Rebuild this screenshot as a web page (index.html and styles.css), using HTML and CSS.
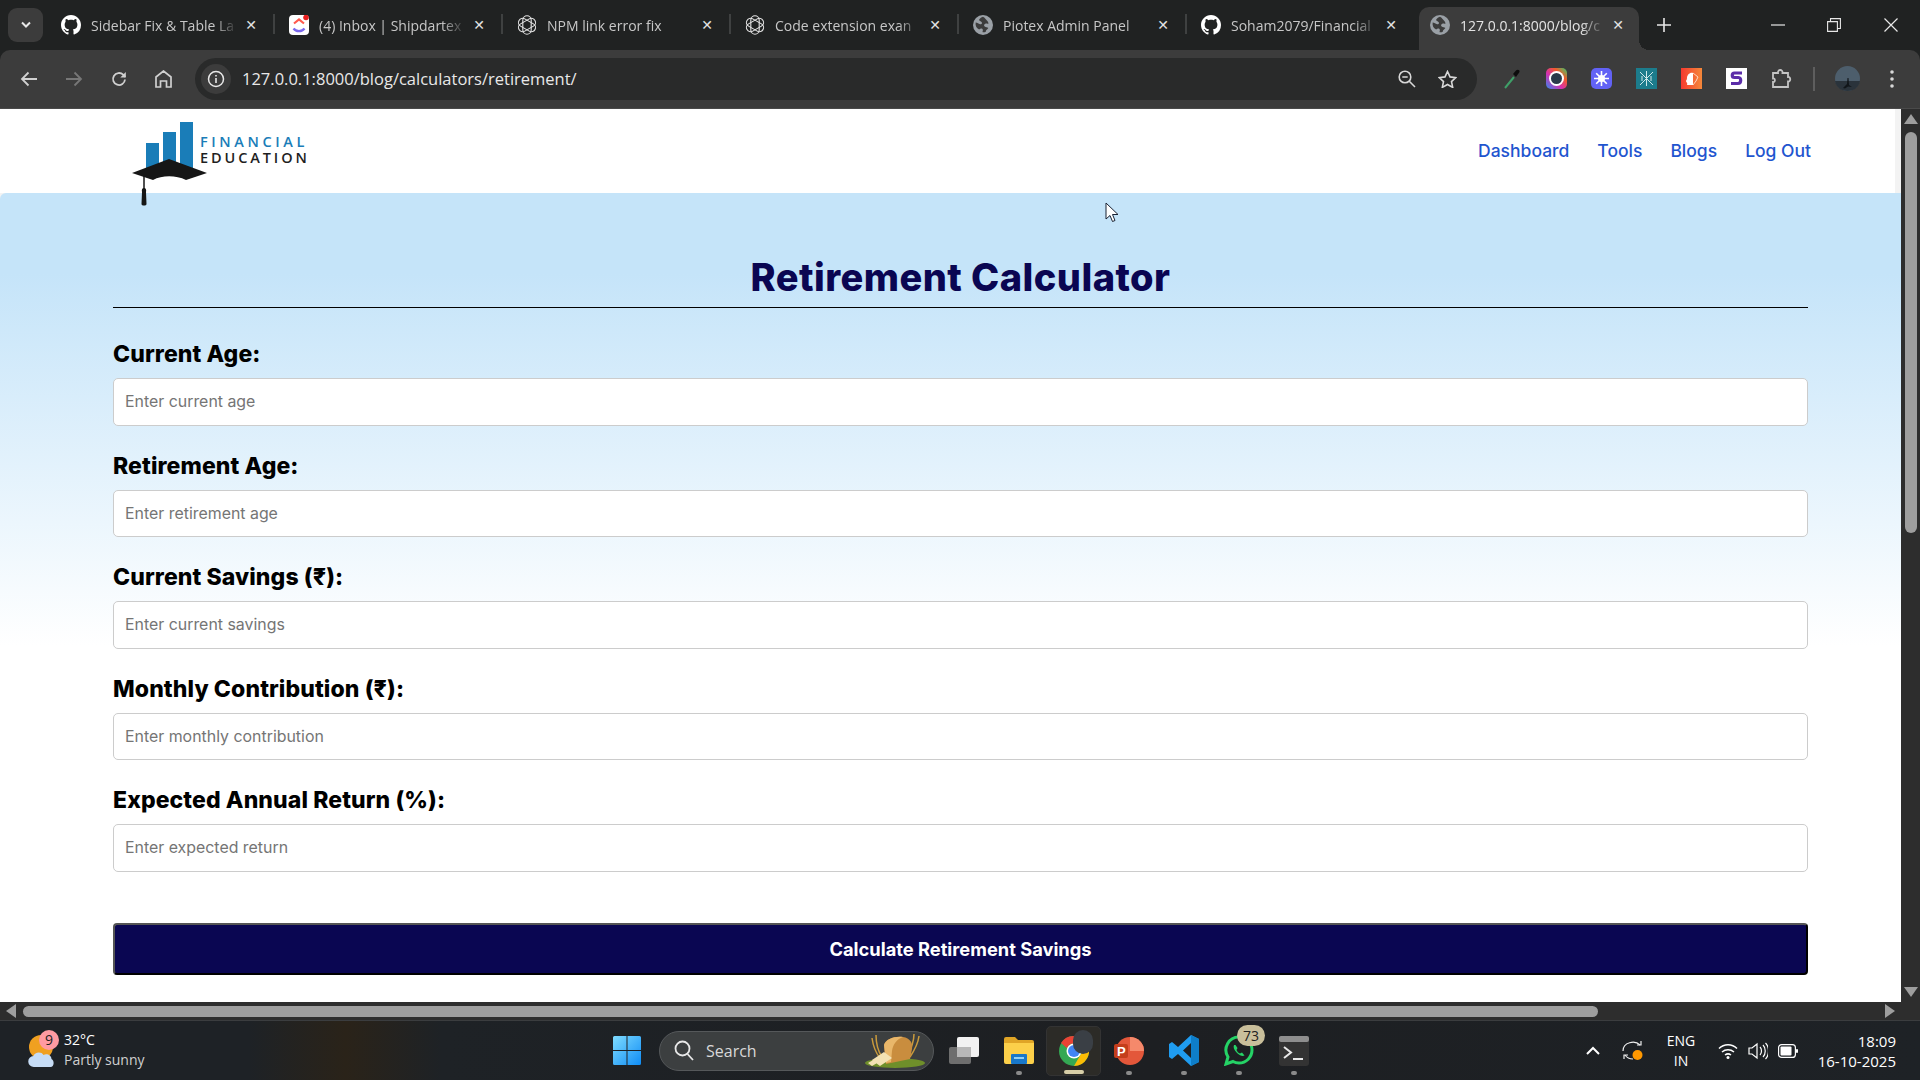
FILE: index.html
```html
<!DOCTYPE html>
<html lang="en">
<head>
    <meta charset="UTF-8">
    <meta name="viewport" content="width=device-width, initial-scale=1.0">
    <title>Retirement Calculator</title>
    <link rel="stylesheet" href="styles.css">
</head>
<body>
    <svg class="defs" width="0" height="0">
        <symbol id="github" viewBox="0 0 16 16"><path fill="#fff" d="M8 0C3.58 0 0 3.58 0 8c0 3.54 2.29 6.53 5.47 7.59.4.07.55-.17.55-.38 0-.19-.01-.82-.01-1.49-2.01.37-2.53-.49-2.69-.94-.09-.23-.48-.94-.82-1.13-.28-.15-.68-.52-.01-.53.63-.01 1.08.58 1.23.82.72 1.21 1.87.87 2.33.66.07-.52.28-.87.51-1.07-1.78-.2-3.64-.89-3.64-3.95 0-.87.31-1.59.82-2.15-.08-.2-.36-1.02.08-2.12 0 0 .67-.21 2.2.82.64-.18 1.32-.27 2-.27.68 0 1.36.09 2 .27 1.53-1.04 2.2-.82 2.2-.82.44 1.1.16 1.92.08 2.12.51.56.82 1.27.82 2.15 0 3.07-1.87 3.75-3.65 3.95.29.25.54.73.54 1.48 0 1.07-.01 1.93-.01 2.2 0 .21.15.46.55.38A8.013 8.013 0 0016 8c0-4.42-3.58-8-8-8z"/></symbol>
        <symbol id="openai" viewBox="0 0 20 20">
            <g fill="none" stroke="#e4e4e4" stroke-width="1.1">
                <rect x="5.800" y=".8" width="8.400" height="18.400" rx="4.200"/>
                <rect x="5.800" y=".8" width="8.400" height="18.400" rx="4.200" transform="rotate(60 10 10)"/>
                <rect x="5.800" y=".8" width="8.400" height="18.400" rx="4.200" transform="rotate(120 10 10)"/>
            </g>
        </symbol>
        <symbol id="globe" viewBox="0 0 18 18">
            <circle cx="9" cy="9" r="9" fill="#9aa0a6"/>
            <path fill="#3c3c3c" d="M9 1.500c-1.600.6-3 1.600-3.600 3 .7 1 2 1.200 2.600 2.200.5 1-.6 1.700-1.600 1.600-1.500-.2-2.400-1.300-4-1.500C2 9.500 3 12 5.500 13c.9-.5 1.800-1.200 2.800-.6 1 .6.5 2 .2 3 .8.3 2 .2 3-.4 0-1.500 1.500-2 2.300-3.300-.8-1-2.300-.6-3.300-1.400-1-.8-.5-2.200.6-2.500 1-.3 1.900.2 2.900-.2C13.500 5 12 4.700 11.300 3.500 10.900 2.800 10 2 9 1.500z"/>
        </symbol>
    </svg>

    <div class="tabstrip">
        <button class="tab-menu"><svg width="12" height="8" viewBox="0 0 12 8"><path d="M2 1.500 6 5.500 10 1.500" fill="none" stroke="#e8e8e8" stroke-width="2"/></svg></button>

        <div class="tab">
            <svg class="tab-icon"><use href="#github"/></svg>
            <span class="tab-title">Sidebar Fix &amp; Table La</span>
            <span class="tab-close">✕</span>
        </div>
        <div class="tab">
            <svg class="tab-icon" viewBox="0 0 20 20">
                <rect width="20" height="20" rx="4" fill="#fff"/>
                <path d="M5 8.500 10 4.500 15 8.500" fill="none" stroke="#ff5a4e" stroke-width="2.200"/>
                <path d="M4.500 13.500C7 17 13 17 15.500 13.500" fill="none" stroke="#7b68ee" stroke-width="2.200"/>
                <circle cx="17" cy="2.500" r="2.800" fill="#e81f1f"/>
            </svg>
            <span class="tab-title">(4) Inbox | Shipdartex</span>
            <span class="tab-close">✕</span>
        </div>
        <div class="tab">
            <svg class="tab-icon"><use href="#openai"/></svg>
            <span class="tab-title">NPM link error fix</span>
            <span class="tab-close">✕</span>
        </div>
        <div class="tab">
            <svg class="tab-icon"><use href="#openai"/></svg>
            <span class="tab-title">Code extension exan</span>
            <span class="tab-close">✕</span>
        </div>
        <div class="tab">
            <svg class="tab-icon"><use href="#globe"/></svg>
            <span class="tab-title">Piotex Admin Panel</span>
            <span class="tab-close">✕</span>
        </div>
        <div class="tab tab-before-active">
            <svg class="tab-icon"><use href="#github"/></svg>
            <span class="tab-title">Soham2079/Financial</span>
            <span class="tab-close">✕</span>
        </div>
        <div class="tab tab-active">
            <svg class="tab-icon"><use href="#globe"/></svg>
            <span class="tab-title">127.0.0.1:8000/blog/c</span>
            <span class="tab-close">✕</span>
        </div>

        <svg class="tab-new" width="14" height="14" viewBox="0 0 14 14"><path d="M7 0v14M0 7h14" stroke="#e8e8e8" stroke-width="1.600"/></svg>

        <div class="win-controls">
            <button class="win-btn"><svg width="14" height="14" viewBox="0 0 14 14"><path d="M0 7h14" stroke="#e8e8e8" stroke-width="1.200"/></svg></button>
            <button class="win-btn"><svg width="14" height="14" viewBox="0 0 14 14"><path d="M.6 3.600h9.800v9.800H.6zM3.500 3.500V.6h9.900v9.900h-3" fill="none" stroke="#e8e8e8" stroke-width="1.100"/></svg></button>
            <button class="win-btn win-close"><svg width="14" height="14" viewBox="0 0 14 14"><path d="M.5.500l13 13M13.500.500l-13 13" stroke="#e8e8e8" stroke-width="1.200"/></svg></button>
        </div>
    </div>

    <div class="toolbar">
        <button class="nav-btn"><svg width="18" height="16" viewBox="0 0 18 16"><path d="M17 8H2M8.500 1.500 2 8l6.500 6.500" fill="none" stroke="#d0d0d0" stroke-width="1.800"/></svg></button>
        <button class="nav-btn"><svg width="18" height="16" viewBox="0 0 18 16"><path d="M1 8h15M9.500 1.500 16 8l-6.500 6.500" fill="none" stroke="#777" stroke-width="1.800"/></svg></button>
        <button class="nav-btn"><svg width="16" height="16" viewBox="0 0 16 16"><path d="M14 8.500A6 6 0 1 1 12.200 3.700L14.300 5.800" fill="none" stroke="#d0d0d0" stroke-width="1.800"/><path d="M14.800 1v5.500H9.300z" fill="#d0d0d0"/></svg></button>
        <button class="nav-btn"><svg width="17" height="18" viewBox="0 0 17 18"><path d="M1 17V7l7.500-6L16 7v10h-4.500v-6h-6v6z" fill="none" stroke="#d0d0d0" stroke-width="1.700"/></svg></button>

        <div class="urlbar">
            <span class="url-info"><svg width="18" height="18" viewBox="0 0 18 18"><circle cx="9" cy="9" r="7.500" fill="none" stroke="#e8e8e8" stroke-width="1.500"/><path d="M9 8v5M9 5v1.600" stroke="#e8e8e8" stroke-width="1.600"/></svg></span>
            <span class="url-text">127.0.0.1:8000/blog/calculators/retirement/</span>
            <svg width="18" height="18" viewBox="0 0 18 18"><circle cx="7" cy="7" r="5.800" fill="none" stroke="#d8d8d8" stroke-width="1.600"/><path d="M4.300 7h5.400M11.300 11.300 17 17" stroke="#d8d8d8" stroke-width="1.600"/></svg>
            <svg width="19" height="18" viewBox="0 0 19 18"><path d="M9.500 1.500 12 6.900l5.800.7-4.300 4 1.200 5.800-5.200-2.900-5.200 2.900 1.200-5.800-4.300-4L7 6.900z" fill="none" stroke="#d8d8d8" stroke-width="1.600"/></svg>
        </div>

        <div class="extensions">
            <span class="ext"><svg width="17" height="21" viewBox="0 0 17 21"><path d="M1 20 10 9" stroke="#3f9f68" stroke-width="2"/><path d="M9 6l3-3.500c1.500-1.500 4-.5 3.500 1.500L12 9z" fill="#0c0c0c"/></svg></span>
            <span class="ext"><svg width="21" height="21" viewBox="0 0 21 21"><defs><linearGradient id="camGrad" x1="0" y1="1" x2="1" y2="0"><stop offset="0" stop-color="#2d8cf0"/><stop offset=".4" stop-color="#d62fb0"/><stop offset=".7" stop-color="#f25b2a"/><stop offset="1" stop-color="#2fd06f"/></linearGradient></defs><rect width="21" height="21" rx="5" fill="url(#camGrad)"/><circle cx="10.500" cy="10.500" r="7.500" fill="#fff"/><circle cx="10.500" cy="10.500" r="5.500" fill="#2a3a4a"/></svg></span>
            <span class="ext"><svg width="21" height="21" viewBox="0 0 21 21"><rect width="21" height="21" rx="5" fill="#6262f5"/><circle cx="10.500" cy="10.500" r="3.500" fill="#fff"/><path d="M10.500 3v15M3 10.500h15M5.200 5.200l10.600 10.600M15.800 5.200 5.200 15.800" stroke="#fff" stroke-width="1.600"/></svg></span>
            <span class="ext"><svg width="21" height="21" viewBox="0 0 21 21"><rect width="21" height="21" fill="#1c7c8c"/><path d="M10.500 3v15M4 4l6.500 6.500L17 4M4 17l6.500-6.500L17 17M6 8v5M15 8v5" fill="none" stroke="#cfe8ea" stroke-width="1"/></svg></span>
            <span class="ext"><svg width="21" height="21" viewBox="0 0 21 21"><defs><linearGradient id="headGrad" x1="0" x2="1"><stop offset="0" stop-color="#f53a2f"/><stop offset="1" stop-color="#f5883a"/></linearGradient></defs><rect width="21" height="21" fill="url(#headGrad)"/><path d="M6 17c1-2-1-3-1-4 0-1 1-1 1-3 0-3 3-6 6-5v12z" fill="#fff"/><path d="M12 5l5 4-2 4-3 4" fill="none" stroke="#ffd9c4" stroke-width="1"/></svg></span>
            <span class="ext"><svg width="21" height="21" viewBox="0 0 21 21"><rect width="21" height="21" fill="#fff"/><path d="M16 5H8.500c-3 0-3 4.500 0 4.500h4c3 0 3 6-.5 6H5" fill="none" stroke="#5b2ca8" stroke-width="3.200"/></svg></span>
            <span class="ext"><svg width="21" height="21" viewBox="0 0 21 21"><path d="M2 5h5c-.5-4 5-4 4.500 0H17v4c3-.5 3 5 0 4.500V19H2v-5c2.500.5 2.500-4 0-3.500z" fill="none" stroke="#c4c4c4" stroke-width="1.800"/></svg></span>
        </div>
        <span class="toolbar-sep"></span>
        <svg class="avatar" width="25" height="25" viewBox="0 0 25 25">
            <circle cx="12.500" cy="12.500" r="12.500" fill="#4d5e6c"/>
            <path d="M0 15h25c-1 6-6 10-12.500 10S1 21 0 15z" fill="#2a333b"/>
            <path d="M8 22l4-4 .5-6h1l.5 7 3 2-4-.5-3 2z" fill="#11161a"/>
        </svg>
        <svg class="kebab" width="4" height="18" viewBox="0 0 4 18"><circle cx="2" cy="2" r="1.800" fill="#d8d8d8"/><circle cx="2" cy="9" r="1.800" fill="#d8d8d8"/><circle cx="2" cy="16" r="1.800" fill="#d8d8d8"/></svg>
    </div>

    <div class="viewport">
        <div class="page">
            <header class="site-header">
                <svg class="logo" width="185" height="92" viewBox="0 0 185 92">
                    <rect x="16" y="25" width="13" height="32" fill="#1a7db8"/>
                    <rect x="33" y="14" width="13" height="43" fill="#1a7db8"/>
                    <rect x="50" y="4" width="13" height="53" fill="#1a7db8"/>
                    <path d="M2 55 39 41 77 55 56 62C46 57 32 57 23 62z" fill="#161616"/>
                    <path d="M14 58v16" stroke="#161616" stroke-width="1.500"/>
                    <path d="M14 70c2 0 2.500 2 2 4l.5 12c0 2-5 2-5 0l.5-12c-.5-2 0-4 2-4z" fill="#161616"/>
                    <text class="logo-top" x="70" y="29">FINANCIAL</text>
                    <text class="logo-bottom" x="70" y="45">EDUCATION</text>
                </svg>
                <nav class="site-nav">
                    <a href="#">Dashboard</a>
                    <a href="#">Tools</a>
                    <a href="#">Blogs</a>
                    <a href="#">Log Out</a>
                </nav>
            </header>

            <main class="calc">
                <h1>Retirement Calculator</h1>
                <form class="calc-form">
                    <div class="field">
                        <label for="currentAge">Current Age:</label>
                        <input type="number" id="currentAge" placeholder="Enter current age">
                    </div>
                    <div class="field">
                        <label for="retireAge">Retirement Age:</label>
                        <input type="number" id="retireAge" placeholder="Enter retirement age">
                    </div>
                    <div class="field">
                        <label for="savings">Current Savings (₹):</label>
                        <input type="number" id="savings" placeholder="Enter current savings">
                    </div>
                    <div class="field">
                        <label for="monthly">Monthly Contribution (₹):</label>
                        <input type="number" id="monthly" placeholder="Enter monthly contribution">
                    </div>
                    <div class="field">
                        <label for="annual">Expected Annual Return (%):</label>
                        <input type="number" id="annual" placeholder="Enter expected return">
                    </div>
                    <button type="button" class="calc-btn">Calculate Retirement Savings</button>
                </form>
            </main>
        </div>

        <div class="vscroll">
            <svg width="14" height="10" viewBox="0 0 14 10"><path d="M7 0l7 10H0z" fill="#9e9e9e"/></svg>
            <div class="vscroll-thumb"></div>
            <svg class="vscroll-down" width="14" height="10" viewBox="0 0 14 10"><path d="M7 10 14 0H0z" fill="#9e9e9e"/></svg>
        </div>

        <svg class="cursor" width="14" height="21" viewBox="0 0 14 21"><path d="M1 1v16l4-3.500 2.500 6 2.500-1-2.500-6H13z" fill="#fff" stroke="#1a2233" stroke-width="1"/></svg>
    </div>

    <div class="hscroll">
        <svg width="10" height="14" viewBox="0 0 10 14"><path d="M0 7l10-7v14z" fill="#9e9e9e"/></svg>
        <div class="hscroll-thumb"></div>
        <svg width="10" height="14" viewBox="0 0 10 14"><path d="M10 7 0 0v14z" fill="#9e9e9e"/></svg>
    </div>

    <div class="taskbar">
        <div class="weather">
            <svg class="weather-icon" width="28" height="34" viewBox="0 0 28 34">
                <circle cx="13" cy="13" r="12" fill="#f0a020"/>
                <path d="M6 33a5.500 5.500 0 0 1-.5-11c1-4 8-5 10-1 3-2 8 0 8 4 3 1 3 8-1 8z" fill="#c6dcf5"/>
            </svg>
            <span class="weather-badge">9</span>
            <div class="weather-text">
                <span>32°C</span>
                <span class="weather-sub">Partly sunny</span>
            </div>
        </div>

        <div class="task-apps">
            <svg class="win-logo" width="28" height="29" viewBox="0 0 28 29">
                <defs><linearGradient id="winGrad" x1="0" y1="0" x2="1" y2="1"><stop offset="0" stop-color="#7fdcff"/><stop offset="1" stop-color="#0f8cf5"/></linearGradient></defs>
                <path fill="url(#winGrad)" d="M0 1.500A1.500 1.500 0 0 1 1.500 0H13.500V14H0zM14.500 0H26.500A1.500 1.500 0 0 1 28 1.500V14H14.500zM0 15H13.500V29H1.500A1.500 1.500 0 0 1 0 27.500zM14.500 15H28V27.500A1.500 1.500 0 0 1 26.500 29H14.500z"/>
            </svg>

            <div class="task-search">
                <svg width="20" height="21" viewBox="0 0 20 21"><circle cx="8.500" cy="8.500" r="7" fill="none" stroke="#e8e8e8" stroke-width="1.800"/><path d="M13.500 14 19 20" stroke="#e8e8e8" stroke-width="1.800"/></svg>
                <span class="task-search-text">Search</span>
                <svg class="bread" width="62" height="38" viewBox="0 0 62 38">
                    <ellipse cx="31" cy="31" rx="30" ry="5" fill="#6f8f2a"/>
                    <path d="M8 6c1 7 3 14 8 20M12 3c0 8 2 16 6 22M55 4c-1 8-5 15-9 21M50 2c0 8-3 15-7 22" stroke="#c99a3c" stroke-width="1.500" fill="none"/>
                    <path d="M20 13c2-6 10-9 19-8 7 1 10 6 9 12l-2 10-24 5z" fill="#c98d3e"/>
                    <path d="M20 13c2-6 10-9 19-8-6 2-10 7-11 14l-1 11-5 1z" fill="#e9b76a"/>
                    <path d="M8 28l12-8 8 6-12 8zM4 31l12-7 4 3-12 7z" fill="#f3e2b4"/>
                </svg>
            </div>

            <div class="task-btn">
                <svg width="30" height="27" viewBox="0 0 30 27"><rect x="0" y="10" width="22" height="17" rx="2" fill="#6e6e6e"/><rect x="8" y="0" width="22" height="20" rx="2" fill="#f2f2f2"/><rect x="8" y="10" width="14" height="10" fill="#b8b8b8"/></svg>
            </div>
            <div class="task-btn task-open">
                <svg width="30" height="27" viewBox="0 0 30 27"><path d="M0 2a2 2 0 0 1 2-2h9l3 3h14a2 2 0 0 1 2 2v2H0z" fill="#e0a526"/><path d="M0 6h30v19a2 2 0 0 1-2 2H2a2 2 0 0 1-2-2z" fill="#fcd04a"/><rect x="7" y="17" width="16" height="10" rx="1" fill="#1877c9"/><rect x="10" y="20" width="10" height="2" fill="#8fd0f5"/></svg>
            </div>
            <div class="task-btn task-open task-current">
                <svg width="30" height="30" viewBox="0 0 30 30">
                    <circle cx="15" cy="15" r="15" fill="#34a853"/>
                    <path d="M15 0a15 15 0 0 1 13 7.500H15a7.500 7.500 0 0 0-7 4.800L2 7A15 15 0 0 1 15 0z" fill="#ea4335"/>
                    <path d="M28 7.500A15 15 0 0 1 15 30l6.500-11.300A7.500 7.500 0 0 0 21 7.500z" fill="#fbbc05"/>
                    <circle cx="15" cy="15" r="7.500" fill="#fff"/><circle cx="15" cy="15" r="6" fill="#4285f4"/>
                </svg>
                <span class="chrome-profile"></span>
            </div>
            <div class="task-btn task-open">
                <svg width="30" height="30" viewBox="0 0 30 30"><circle cx="16" cy="15" r="14" fill="#e3573a"/><path d="M16 1a14 14 0 0 1 14 14H16z" fill="#f5896b"/><rect x="0" y="8" width="14" height="14" rx="2" fill="#c43e1c"/><text class="ppt-letter" x="3" y="20">P</text></svg>
            </div>
            <div class="task-btn task-open">
                <svg width="30" height="31" viewBox="0 0 30 31"><path d="M22 0 30 4v23l-8 4-13-12-6 5-3-2V9l3-2 6 5zM22 8l-8 7.500 8 7.500z" fill="#1f9cf0"/><path d="M22 0 30 4v23l-8 4z" fill="#0e7ec9"/></svg>
            </div>
            <div class="task-btn task-open">
                <svg width="30" height="31" viewBox="0 0 30 31"><path d="M15 2a13 13 0 0 1 0 26c-2.200 0-4.300-.5-6-1.500L2 29l2-7A13 13 0 0 1 15 2z" fill="none" stroke="#25d366" stroke-width="3"/><path d="M10 10c-1 2 0 5 3 8s6 3.500 7.500 2.500l-2.500-3-2 1c-1.500-.5-3-2-3.500-3.500l1-2-2-3z" fill="#25d366"/></svg>
                <span class="whatsapp-badge">73</span>
            </div>
            <div class="task-btn task-open">
                <svg width="30" height="30" viewBox="0 0 30 30"><rect width="30" height="30" rx="3" fill="#333"/><rect width="30" height="6" rx="2" fill="#8e8e8e"/><path d="M5 11l7 5.500L5 22" fill="none" stroke="#e8e8e8" stroke-width="2"/><path d="M14 23h10" stroke="#e8e8e8" stroke-width="2"/></svg>
            </div>
        </div>

        <div class="tray">
            <svg class="tray-chevron" width="14" height="9" viewBox="0 0 14 9"><path d="M1 8l6-6 6 6" fill="none" stroke="#fff" stroke-width="2"/></svg>
            <svg class="tray-sync" width="21" height="21" viewBox="0 0 21 21"><path d="M1 11C1 2 13 0 18 5M20 12" fill="none" stroke="#eee" stroke-width="1.200"/><path d="M15 5h4V1" fill="none" stroke="#eee" stroke-width="1.200"/><path d="M3 15c2 3 5 4 8 4M2 19v-4h4" fill="none" stroke="#eee" stroke-width="1.200"/><circle cx="15.500" cy="15" r="5" fill="#ff9800"/></svg>
            <div class="tray-lang"><span>ENG</span><span>IN</span></div>
            <svg class="tray-wifi" width="20" height="16" viewBox="0 0 20 16"><path d="M1 5.500c5-5 13-5 18 0M4 9c3.500-3 8.500-3 12 0M7 12c2-1.500 4-1.500 6 0" fill="none" stroke="#fff" stroke-width="1.500"/><circle cx="10" cy="14.500" r="1.500" fill="#fff"/></svg>
            <svg class="tray-volume" width="20" height="18" viewBox="0 0 20 18"><path d="M1 6h3l5-4v14l-5-4H1z" fill="none" stroke="#fff" stroke-width="1.200"/><path d="M12 5c2 2 2 6 0 8M15 3c3 3 3 9 0 12M17.500 1c4 4 4 12 0 16" fill="none" stroke="#fff" stroke-width="1.200"/></svg>
            <svg class="tray-battery" width="20" height="14" viewBox="0 0 20 14"><rect x=".6" y=".6" width="16.800" height="12.800" rx="3" fill="none" stroke="#fff" stroke-width="1.200"/><rect x="2.500" y="2.500" width="11" height="9" rx="1" fill="#fff"/><rect x="18" y="5" width="2" height="4" rx="1" fill="#fff"/></svg>
            <div class="tray-clock"><span>18:09</span><span>16-10-2025</span></div>
        </div>
    </div>
</body>
</html>
```

FILE: styles.css
```css
* {
    box-sizing: border-box;
}

html, body {
    margin: 0;
    height: 1080px;
    overflow: hidden;
}

body {
    display: flex;
    flex-direction: column;
    font-family: "Inter", "Liberation Sans", sans-serif;
    background: #202222;
}

button {
    border: 0;
    padding: 0;
    background: none;
}

.defs {
    position: absolute;
}

/* browser tabs */
.tabstrip {
    display: flex;
    align-items: flex-end;
    height: 50px;
    padding-left: 8px;
    background: #202222;
    font-family: "Open Sans", "Liberation Sans", sans-serif;
    font-size: 14px;
    color: #c7c7c7;
}

.tab-menu {
    display: flex;
    align-items: center;
    justify-content: center;
    align-self: flex-start;
    width: 35px;
    height: 34px;
    margin: 8px 4px 0 0;
    border-radius: 9px;
    background: #3c3c3c;
}

.tab {
    position: relative;
    display: flex;
    align-items: center;
    width: 228px;
    height: 43px;
    padding: 0 17px 7px 14px;
}

.tab::after {
    content: "";
    position: absolute;
    right: 0;
    top: 7px;
    height: 20px;
    width: 2px;
    background: #3f4141;
}

.tab-before-active::after,
.tab-active::after {
    display: none;
}

.tab-icon {
    flex: none;
    width: 20px;
    height: 20px;
    margin-right: 10px;
}

.tab-title {
    flex: 1;
    overflow: hidden;
    white-space: nowrap;
    -webkit-mask-image: linear-gradient(to left, transparent 0, #000 24px);
    mask-image: linear-gradient(to left, transparent 0, #000 24px);
}

.tab-close {
    flex: none;
    width: 14px;
    margin-left: 6px;
    font-family: "DejaVu Sans", sans-serif;
    font-size: 14px;
    color: #e2e2e2;
    text-align: center;
}

.tab-active {
    margin-left: 4px;
    width: 220px;
    padding: 0 14px 7px 11px;
    border-radius: 10px 10px 0 0;
    background: #3c3c3c;
    color: #e4e4e4;
}

.tab-active::before {
    content: "";
    position: absolute;
    right: -10px;
    bottom: 0;
    width: 10px;
    height: 10px;
    background: radial-gradient(circle at 100% 0, transparent 10px, #3c3c3c 10px);
}

.tab-new {
    align-self: center;
    margin-left: 18px;
}

.win-controls {
    display: flex;
    align-self: stretch;
    margin-left: auto;
}

.win-btn {
    display: flex;
    align-items: center;
    justify-content: center;
    width: 56px;
}

.win-close {
    width: 58px;
}

/* browser toolbar */
.toolbar {
    display: flex;
    align-items: center;
    height: 59px;
    padding: 0 0 1px 6px;
    border-radius: 10px 10px 0 0;
    border-bottom: 1px solid #4a4a4a;
    background: #3c3c3c;
}

.nav-btn {
    display: flex;
    align-items: center;
    justify-content: center;
    flex: none;
    width: 45px;
}

.urlbar {
    display: flex;
    align-items: center;
    gap: 22px;
    flex: none;
    width: 1282px;
    height: 42px;
    margin-left: 9px;
    padding: 0 20px 0 6px;
    border-radius: 21px;
    background: #292a2a;
}

.url-info {
    display: flex;
    align-items: center;
    justify-content: center;
    flex: none;
    width: 30px;
    height: 30px;
    border-radius: 50%;
    background: #3c3c3c;
}

.url-text {
    flex: 1;
    margin-left: -11px;
    font-family: "Open Sans", "Liberation Sans", sans-serif;
    font-size: 16.5px;
    color: #e8e8e8;
}

.extensions {
    display: flex;
    margin-left: 14px;
}

.ext {
    display: flex;
    align-items: center;
    justify-content: center;
    width: 45px;
}

.ext:first-child {
    width: 43px;
}

.toolbar-sep {
    width: 2px;
    height: 24px;
    margin-left: 9px;
    background: #5e5e5e;
}

.avatar {
    flex: none;
    margin-left: 20px;
}

.kebab {
    margin-left: 30px;
}

/* page area */
.viewport {
    position: relative;
    display: flex;
    height: 893px;
}

.page {
    flex: 1;
    overflow: hidden;
    background: #f3f3f3;
}

.site-header {
    position: relative;
    z-index: 1;
    display: flex;
    justify-content: space-between;
    align-items: flex-start;
    height: 84px;
    margin-right: 6px;
    padding: 0 84px 0 130px;
    background: #fff;
}

.logo {
    flex: none;
    margin-top: 9px;
}

.logo-top,
.logo-bottom {
    font-family: "Open Sans", "Liberation Sans", sans-serif;
    font-size: 14.5px;
    font-weight: 600;
}

.logo-top {
    fill: #1a7db8;
    letter-spacing: 3.6px;
}

.logo-bottom {
    fill: #1f1f1f;
    letter-spacing: 2.9px;
}

.site-nav {
    display: flex;
    gap: 28px;
    margin-top: 29px;
}

.site-nav a {
    font-size: 17.5px;
    font-weight: 500;
    line-height: 26px;
    color: #1f55cf;
    text-decoration: none;
}

.calc {
    height: 809px;
    padding: 60px 93px 0 113px;
    border-radius: 6px 0 0 0;
    background: linear-gradient(#c5e4f9 10%, #fff 56%);
}

.calc h1 {
    margin: 0;
    padding-bottom: 6px;
    border-bottom: 1.5px solid #000;
    font-size: 38px;
    font-weight: 800;
    letter-spacing: .45px;
    line-height: 48px;
    color: #0a0652;
    text-align: center;
}

.calc-form {
    padding-top: 29px;
}

.field {
    margin-bottom: 23px;
}

.field label {
    display: block;
    margin-bottom: 6px;
    font-size: 23px;
    font-weight: 800;
    letter-spacing: .1px;
    line-height: 35px;
    color: #000;
}

.field input {
    display: block;
    width: 100%;
    height: 47.5px;
    padding: 0 11px;
    border: 1.5px solid #ccc;
    border-radius: 5px;
    background: #fff;
    font-family: inherit;
    font-size: 15.9px;
}

.field input::placeholder {
    color: #757575;
}

.calc-btn {
    display: block;
    width: 100%;
    height: 52px;
    margin-top: 51px;
    border: 2px solid;
    border-color: #555 #000 #000 #555;
    border-radius: 4px;
    background: #0a0652;
    font-family: inherit;
    font-size: 18.3px;
    font-weight: 700;
    color: #fff;
}

.cursor {
    position: absolute;
    left: 1105px;
    top: 93px;
    z-index: 2;
}

/* scrollbars */
.vscroll {
    display: flex;
    flex-direction: column;
    align-items: center;
    flex: none;
    width: 19px;
    padding-top: 5px;
    background: #2d2d2d;
}

.vscroll-thumb {
    width: 12px;
    height: 401px;
    margin-top: 8px;
    border-radius: 6px;
    background: #9e9e9e;
}

.vscroll-down {
    margin-top: auto;
    margin-bottom: 5px;
}

.hscroll {
    display: flex;
    align-items: center;
    height: 18px;
    padding: 0 25px 0 6px;
    background: #2d2d2d;
}

.hscroll-thumb {
    width: 1575px;
    height: 11px;
    margin-left: 7px;
    margin-right: auto;
    border-radius: 6px;
    background: #9e9e9e;
}

/* windows taskbar */
.taskbar {
    display: flex;
    align-items: center;
    height: 60px;
    border-top: 1px solid #3b3d3f;
    background: linear-gradient(90deg, #1e2226 13%, #2a2319 18%, #1e2226 23%, #1d1f22 60%, #1e2226);
    font-family: "Open Sans", "Liberation Sans", sans-serif;
    color: #fff;
}

.weather {
    position: relative;
    display: flex;
    align-items: center;
    flex: none;
    gap: 8px;
    width: 613px;
    padding-left: 28px;
}

.weather-badge {
    position: absolute;
    left: 39px;
    top: -2px;
    width: 20px;
    height: 20px;
    border-radius: 50%;
    background: #ff9aa2;
    font-size: 14px;
    line-height: 20px;
    color: #222;
    text-align: center;
}

.weather-text {
    display: flex;
    flex-direction: column;
    margin-top: -2px;
    font-size: 14px;
    line-height: 20px;
}

.weather-sub {
    color: #d0d0d0;
}

.task-apps {
    display: flex;
    align-items: center;
}

.win-logo {
    margin-right: 18px;
}

.task-search {
    display: flex;
    align-items: center;
    width: 275px;
    height: 40px;
    margin-right: 2px;
    padding: 0 7px 0 14px;
    border: 1px solid #55585a;
    border-radius: 20px;
    background: #3c3f40;
}

.task-search-text {
    margin-left: 12px;
    font-size: 16px;
    color: #d8d8d8;
}

.bread {
    margin-left: auto;
}

.task-btn {
    position: relative;
    display: flex;
    align-items: center;
    justify-content: center;
    width: 55px;
    height: 50px;
}

.task-open::after {
    content: "";
    position: absolute;
    left: 50%;
    bottom: 1px;
    width: 6px;
    height: 4px;
    margin-left: -3px;
    border-radius: 2px;
    background: #8a8a8a;
}

.task-current {
    border: 1px solid #333;
    border-radius: 5px;
    background: #2c2b27;
}

.task-current::after {
    width: 20px;
    margin-left: -10px;
    background: #d8cfa8;
}

.chrome-profile {
    position: absolute;
    left: 26px;
    top: 3px;
    width: 20px;
    height: 24px;
    border-radius: 10px;
    background: #3a3f45;
}

.ppt-letter {
    font-family: "Liberation Sans", sans-serif;
    font-size: 13px;
    font-weight: 700;
    fill: #fff;
}

.whatsapp-badge {
    position: absolute;
    left: 26px;
    top: -1px;
    width: 28px;
    height: 21px;
    border-radius: 11px;
    background: #c9bf9b;
    font-size: 14px;
    line-height: 21px;
    color: #222;
    text-align: center;
}

.tray {
    display: flex;
    align-items: center;
    margin-left: auto;
    padding-right: 24px;
}

.tray-sync {
    margin-left: 22px;
}

.tray-lang {
    display: flex;
    flex-direction: column;
    align-items: center;
    width: 28px;
    margin-left: 24px;
    font-size: 14px;
    line-height: 20px;
}

.tray-wifi {
    margin-left: 23px;
}

.tray-volume {
    margin-left: 10px;
}

.tray-battery {
    margin-left: 10px;
}

.tray-clock {
    display: flex;
    flex-direction: column;
    align-items: flex-end;
    width: 98px;
    font-size: 15px;
    line-height: 20px;
}
```
